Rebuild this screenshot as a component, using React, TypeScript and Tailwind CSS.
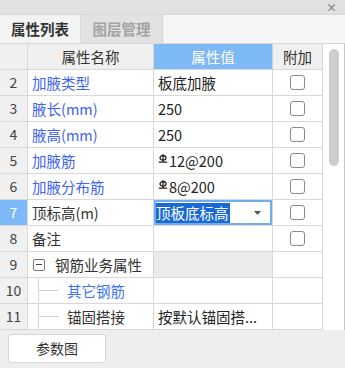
import React from 'react';

const font = { fontFamily: '"Noto Sans CJK SC", "Noto Sans", sans-serif' };

const Check = () => (
  <div className="w-[15px] h-[15px] rounded-[3px] border border-[#8a8a8a] bg-white" />
);

type Row = {
  n: number;
  name: React.ReactNode;
  value?: React.ReactNode;
  blue?: boolean;
  check?: boolean;
  group?: boolean;
  selected?: boolean;
};

// rebar grade symbol
const Steel = () => (
  <svg width="10" height="9" viewBox="0 0 10 9" className="inline-block mr-[1px] -mt-[5px]">
    <ellipse cx="5" cy="3.8" rx="3" ry="2.3" fill="none" stroke="#222" strokeWidth="1.3" />
    <path d="M5 0.3v7.5M0.8 8.2h8.4" stroke="#222" strokeWidth="1.3" fill="none" />
  </svg>
);

const TreeLine = () => (
  <div className="w-[36px] h-full shrink-0 flex items-center">
    <div className="w-[11px] h-full border-r border-[#d6d6d6]" />
    <div className="w-[19px] border-t border-[#cfcfcf]" />
  </div>
);

const rows: Row[] = [
  { n: 2, name: '加腋类型', value: '板底加腋', blue: true, check: true },
  { n: 3, name: '腋长(mm)', value: '250', blue: true, check: true },
  { n: 4, name: '腋高(mm)', value: '250', blue: true, check: true },
  { n: 5, name: '加腋筋', value: <><Steel />12@200</>, blue: true, check: true },
  { n: 6, name: '加腋分布筋', value: <><Steel />8@200</>, blue: true, check: true },
  { n: 7, name: '顶标高(m)', check: true, selected: true },
  { n: 8, name: '备注', check: true },
  { n: 9, name: '钢筋业务属性', group: true },
  { n: 10, name: '其它钢筋', blue: true },
  { n: 11, name: '锚固搭接', value: '按默认锚固搭...' },
];

export default function App() {
  return (
    <div className="w-[345px] h-[368px] bg-[#eeeeee] flex flex-col text-[#333] overflow-hidden" style={font}>
      <div className="h-[14px] bg-[#e1e1e1] flex justify-end items-center pr-[8px]">
        <span className="text-[11px] leading-none font-bold text-[#888]">×</span>
      </div>
      <div className="h-[29px] flex border-t border-[#d8d8d8] bg-[#f6f6f6]">
        <div className="w-[81px] flex items-center justify-center text-[14.5px] font-bold text-[#333] bg-[#f3f3f3] border-r border-[#d8d8d8]">
          属性列表
        </div>
        <div className="w-[82px] flex items-center justify-center text-[14.5px] font-bold text-[#a3a3a3] bg-[#e2e2e2] border-r border-[#d4d4d4]">
          图层管理
        </div>
        <div className="flex-1" />
      </div>
      <div className="flex bg-white border-t border-[#d8d8d8] border-r border-r-[#c8c8c8]">
        <div className="flex-1 flex flex-col">
          <div className="h-[26px] flex text-[14.5px] border-b border-[#d8d8d8]">
            <div className="w-[28px] bg-[#f0f0f0] border-r border-[#d8d8d8]" />
            <div className="w-[126px] bg-[#f0f0f0] border-r border-[#d8d8d8] flex items-center justify-center">属性名称</div>
            <div className="w-[119px] bg-[#7cb9f6] text-white flex items-center justify-center border-r border-[#cfcfcf]">属性值</div>
            <div className="w-[50px] bg-[#f0f0f0] flex items-center justify-center border-r border-[#d8d8d8]">附加</div>
          </div>
          {rows.map((r) => (
            <div key={r.n} className="h-[26px] flex text-[14.5px] border-b border-[#d8d8d8]">
              <div
                className={
                  'w-[28px] flex items-center justify-center border-r border-[#d8d8d8] text-[14px] ' +
                  (r.selected ? 'bg-[#7cb9f6] text-white' : 'bg-[#f0f0f0] text-[#444]')
                }
              >
                {r.n}
              </div>
              <div className="w-[126px] flex items-center border-r border-[#d8d8d8] overflow-hidden whitespace-nowrap">
                {r.group ? (
                  <>
                    <div className="ml-[5px] w-[12px] h-[12px] border border-[#777] rounded-[2px] flex items-center justify-center">
                      <div className="w-[6px] border-t border-[#444]" />
                    </div>
                    <span className="ml-[10px]">{r.name}</span>
                  </>
                ) : r.n >= 10 ? (
                  <>
                    <TreeLine />
                    <span className={'ml-[3px] ' + (r.blue ? 'text-[#3e73f4]' : '')}>{r.name}</span>
                  </>
                ) : (
                  <span className={'pl-[4px] ' + (r.blue ? 'text-[#4062f0]' : '')}>{r.name}</span>
                )}
              </div>
              <div
                className={
                  'w-[119px] flex items-center border-r border-[#d8d8d8] whitespace-nowrap ' +
                  (r.group ? 'bg-[#ebebeb]' : '')
                }
              >
                {r.selected ? (
                  <div className="w-full h-full border-2 border-[#6eaef0] flex items-center justify-between pr-[9px]">
                    <span className="bg-[#1a6ad6] text-white leading-[20px] pr-[1px]">顶板底标高</span>
                    <svg width="7" height="4" viewBox="0 0 7 4"><path d="M0 0h7L3.5 4z" fill="#555" /></svg>
                  </div>
                ) : (
                  <span className="pl-[4px] text-[#222] flex items-center">{r.value}</span>
                )}
              </div>
              <div className="w-[50px] flex items-center justify-center border-r border-[#d8d8d8]">
                {r.check && <Check />}
              </div>
            </div>
          ))}
        </div>
        <div className="w-[21px] bg-white pt-[5px] flex justify-center">
          <div className="w-[10px] h-[117px] rounded-full bg-[#cdcdcd]" />
        </div>
      </div>
      <div className="flex-1 px-[8px] pt-[4px]">
        <button className="w-[98px] h-[29px] bg-white border border-[#d6d6d6] rounded-[3px] text-[14px] text-[#333]">
          参数图
        </button>
      </div>
    </div>
  );
}
